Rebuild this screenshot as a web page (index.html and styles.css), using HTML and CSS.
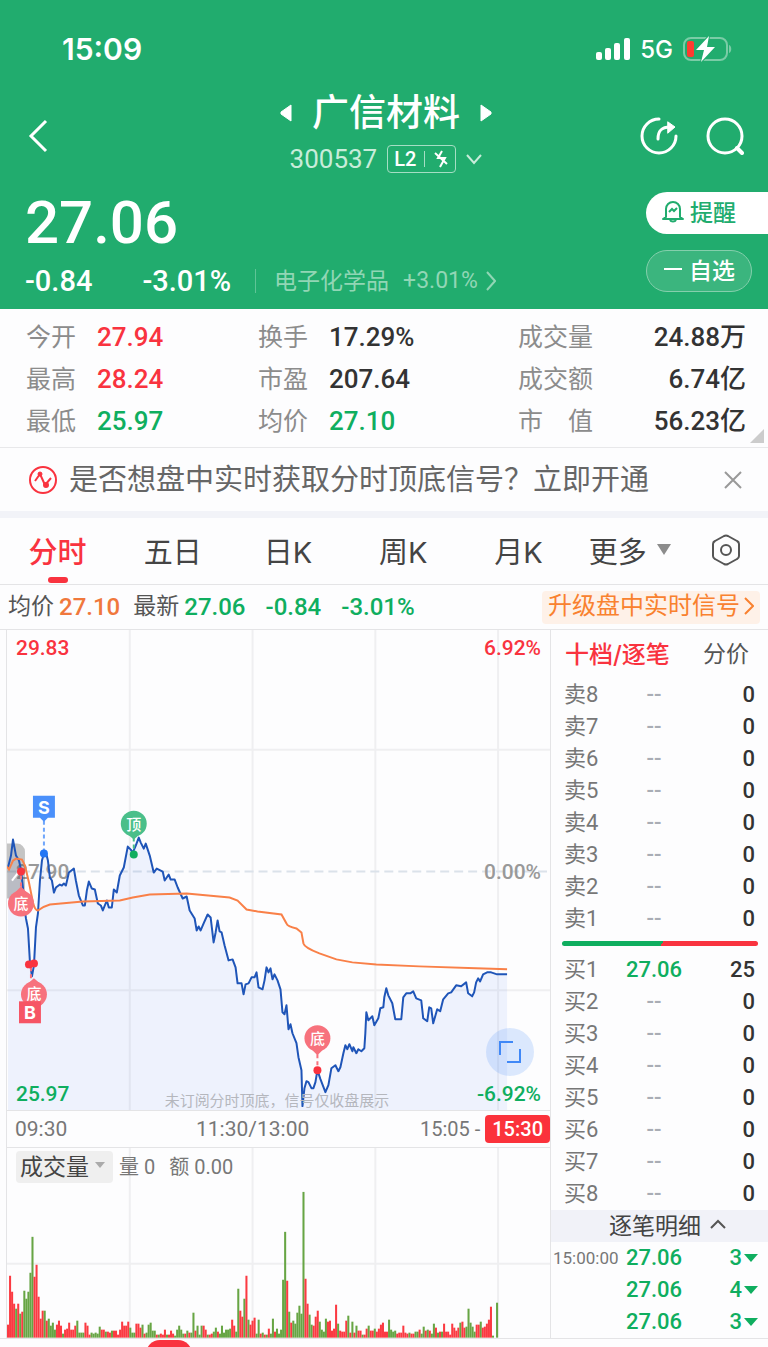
FILE: index.html
```html
<!DOCTYPE html>
<html lang="zh-CN">
<head>
    <meta charset="UTF-8">
    <meta name="viewport" content="width=device-width, initial-scale=1.0">
    <title>广信材料 300537</title>
    <link rel="stylesheet" href="styles.css">
</head>
<body>
    <header class="header">
        <div class="status-bar">
            <span class="clock">15:09</span>
            <div class="status-icons">
                <svg width="34" height="24" viewBox="0 0 34 24" fill="#fff">
                    <rect x="0" y="15" width="6" height="8" rx="2"/>
                    <rect x="9" y="11" width="6" height="12" rx="2"/>
                    <rect x="18" y="6" width="6" height="17" rx="2"/>
                    <rect x="28" y="1" width="6" height="22" rx="2"/>
                </svg>
                <span>5G</span>
                <svg width="50" height="26" viewBox="0 0 50 26">
                    <rect x="1" y="2" width="43" height="22" rx="7" fill="none" stroke="#7acca6" stroke-width="2"/>
                    <path d="M46 9c3 1 3 7 0 8z" fill="#7acca6"/>
                    <rect x="4" y="5" width="7" height="16" rx="2" fill="#ff3b30"/>
                    <path d="M26 0L13 14h8l-3 12 14-15h-8z" fill="#fff" stroke="#21ac6e" stroke-width="2" paint-order="stroke"/>
                </svg>
            </div>
        </div>

        <div class="nav">
            <button class="icon-btn back" aria-label="返回">
                <svg width="20" height="34" viewBox="0 0 20 34" fill="none" stroke="#fff" stroke-width="3"><path d="M18 2L3 17l15 15"/></svg>
            </button>
            <div class="nav-title">
                <div class="stock-name">
                    <svg width="12" height="18" viewBox="0 0 12 18" fill="#fff" stroke="#fff" stroke-linejoin="round"><path d="M11 1v16L1 10V8z"/></svg>
                    <h1>广信材料</h1>
                    <svg width="12" height="18" viewBox="0 0 12 18" fill="#fff" stroke="#fff" stroke-linejoin="round"><path d="M1 1v16l10-7V8z"/></svg>
                </div>
                <div class="stock-code">
                    <span>300537</span>
                    <span class="level">L2
                        <i></i>
                        <svg width="16" height="18" viewBox="0 0 16 18" fill="none" stroke="#fff" stroke-width="2"><path d="M9 1L5 8h7l-5 9M2 3l12 11"/></svg>
                    </span>
                    <svg width="16" height="12" viewBox="0 0 16 12" fill="none" stroke="#c8ecda" stroke-width="2"><path d="M1 2l7 8 7-8"/></svg>
                </div>
            </div>
            <div class="nav-actions">
                <button class="icon-btn" aria-label="分享">
                    <svg width="38" height="38" viewBox="0 0 38 38" fill="none" stroke="#fff" stroke-width="3" stroke-linecap="round">
                        <path d="M19 2A17 17 0 1 0 36 19"/>
                        <path d="M18 22c0-8 3-12 12-12" />
                        <path d="M28 5l7 5-7 6z" fill="#fff" stroke-width="1"/>
                    </svg>
                </button>
                <button class="icon-btn" aria-label="搜索">
                    <svg width="38" height="38" viewBox="0 0 38 38" fill="none" stroke="#fff" stroke-width="3" stroke-linecap="round">
                        <circle cx="19" cy="19" r="17"/>
                        <path d="M31 31l5 5" stroke-width="4"/>
                    </svg>
                </button>
            </div>
        </div>

        <div class="quote">
            <div class="quote-main">
                <div class="price">27.06</div>
                <div class="changes">
                    <span class="diff">-0.84</span>
                    <span class="diff percent">-3.01%</span>
                    <a class="sector" href="#">电子化学品 <span>+3.01%</span>
                        <svg width="10" height="20" viewBox="0 0 10 20" fill="none" stroke="currentColor" stroke-width="2"><path d="M1 1l8 9-8 9"/></svg>
                    </a>
                </div>
            </div>
            <div class="quote-actions">
                <button class="alert-btn">
                    <svg width="22" height="24" viewBox="0 0 22 24" fill="none" stroke="currentColor" stroke-width="2">
                        <path d="M4 18V10a7 7 0 0 1 14 0v8l3 2H1z" stroke-linejoin="round"/>
                        <path d="M8 21c1 2 5 2 6 0M7 13l3-3 2 2 3-3"/>
                    </svg>
                    提醒
                </button>
                <button class="watch-btn">
                    <svg width="20" height="4" viewBox="0 0 20 4"><path d="M1 2h18" stroke="#fff" stroke-width="2"/></svg>
                    自选
                </button>
            </div>
        </div>
    </header>

    <section class="stats">
        <dl>
            <div><dt>今开</dt><dd class="up">27.94</dd></div>
            <div><dt>最高</dt><dd class="up">28.24</dd></div>
            <div><dt>最低</dt><dd class="down">25.97</dd></div>
        </dl>
        <dl>
            <div><dt>换手</dt><dd>17.29%</dd></div>
            <div><dt>市盈</dt><dd>207.64</dd></div>
            <div><dt>均价</dt><dd class="down">27.10</dd></div>
        </dl>
        <dl class="wide">
            <div><dt>成交量</dt><dd>24.88万</dd></div>
            <div><dt>成交额</dt><dd>6.74亿</dd></div>
            <div><dt>市　值</dt><dd>56.23亿</dd></div>
        </dl>
    </section>

    <div class="notice">
        <svg width="28" height="28" viewBox="0 0 28 28" fill="none" stroke="#f9333f" stroke-width="2">
            <circle cx="14" cy="14" r="13"/>
            <path d="M6 15l5-7 5 11 6-7" stroke-linejoin="round"/>
            <circle cx="11" cy="8" r="2" fill="#f9333f" stroke-width="1"/>
            <circle cx="17" cy="19" r="2" fill="#f9333f"/>
        </svg>
        <p>是否想盘中实时获取分时顶底信号？立即开通</p>
        <button class="icon-btn" aria-label="关闭">
            <svg width="18" height="18" viewBox="0 0 18 18" stroke="#999" stroke-width="2"><path d="M1 1l16 16M17 1L1 17"/></svg>
        </button>
    </div>

    <nav class="tabs">
        <button class="tab active">分时</button>
        <button class="tab">五日</button>
        <button class="tab">日K</button>
        <button class="tab">周K</button>
        <button class="tab">月K</button>
        <button class="tab">更多 <svg width="14" height="11" viewBox="0 0 14 11" fill="#8c8c8c"><path d="M0 0h14L7 11z"/></svg></button>
        <button class="tab" aria-label="设置">
            <svg width="30" height="32" viewBox="0 0 30 32" fill="none" stroke="#555" stroke-width="2" stroke-linejoin="round">
                <path d="M13 2q2-1 4 0l9 5q2 1 2 3v12q0 2-2 3l-9 5q-2 1-4 0l-9-5q-2-1-2-3V10q0-2 2-3z"/>
                <circle cx="15" cy="16" r="5"/>
            </svg>
        </button>
    </nav>

    <div class="summary">
        <span>均价</span><b class="avg">27.10</b>
        <span class="latest">最新</span><b class="down">27.06</b>
        <b class="down gap">-0.84</b>
        <b class="down gap">-3.01%</b>
        <a class="upgrade" href="#">升级盘中实时信号<svg width="10" height="18" viewBox="0 0 10 18" fill="none" stroke="currentColor" stroke-width="2"><path d="M1 1l8 8-8 8"/></svg></a>
    </div>

    <main class="main">
        <div class="charts">
            <div class="price-chart">
                <svg viewBox="0 0 544 481">
                    <path class="grid" d="M0 120H544M0 361H544M123 0V481M246 0V481M369 0V481M492 0V481"/>
                    <path class="mid" d="M0 242H544"/>
                    <text class="label muted" x="9" y="249">27.90</text>
                    <path id="priceArea" class="area"/>
                    <path class="handle" d="M0 214H10a8 8 0 0 1 8 8v39a8 8 0 0 1-8 8H0z"/>
                    <path d="M5 251l7-9" stroke="#fff" stroke-width="2"/>
                    <path id="priceLine" class="line"/>
                    <path class="avg-line" d="M0 237L2 240L6 231L9 229L15 230L18 236L22 253L26 273Q28 281 31 281Q36 277 43 275L76 272L113 271L126 268L143 265L180 264L223 268L231 271L240 280L251 282L275 285L280 294Q281 297 290 299L295 303L297 314Q298 318 313 324L330 330L346 333L370 335L413 337L470 339L501 340"/>

                    <g class="mark blue">
                        <path d="M37 191V224" class="dash"/>
                        <path d="M26 166h22v22h-7l-4 4-4-4h-7z"/>
                        <circle class="dot" cx="37" cy="224" r="4"/>
                        <text x="37" y="184">S</text>
                    </g>
                    <g class="mark green">
                        <path d="M127 208V225" class="dash"/>
                        <path d="M120 204h14l-7 6z"/>
                        <circle cx="127" cy="194" r="13"/>
                        <circle class="dot" cx="127" cy="225" r="4"/>
                        <text class="cn" x="127" y="200">顶</text>
                    </g>
                    <g class="mark red">
                        <path d="M14 246V258" class="dash"/>
                        <path d="M7 264h14l-7-7z"/>
                        <circle cx="14" cy="274" r="13"/>
                        <circle class="dot" cx="14" cy="242" r="4"/>
                        <text class="cn" x="14" y="280">底</text>
                    </g>
                    <g class="mark red">
                        <path d="M24 338V352" class="dash"/>
                        <path d="M20 355h14l-7-6z"/>
                        <circle cx="27" cy="365" r="13"/>
                        <circle class="dot" cx="27" cy="334" r="4"/>
                        <circle class="dot" cx="22" cy="335" r="4"/>
                        <text class="cn" x="27" y="370">底</text>
                        <path class="solid" d="M12 372h22v22h-22z"/>
                        <text x="23" y="390">B</text>
                    </g>
                    <g class="mark red">
                        <path d="M311 425V441" class="dash"/>
                        <path d="M304 419h14l-7 7z"/>
                        <circle cx="311" cy="409" r="13"/>
                        <circle class="dot" cx="311" cy="441" r="4"/>
                        <text class="cn" x="311" y="415">底</text>
                    </g>

                    <text class="label up" x="9" y="25">29.83</text>
                    <text class="label up" x="535" y="25" text-anchor="end">6.92%</text>
                    <text class="label muted" x="535" y="249" text-anchor="end">0.00%</text>
                    <text class="label down" x="9" y="472">25.97</text>
                    <text class="label down" x="535" y="472" text-anchor="end">-6.92%</text>
                    <text class="hint" x="158" y="477">未订阅分时顶底，信号仅收盘展示</text>
                </svg>
                <button class="expand" aria-label="全屏">
                    <svg width="22" height="22" viewBox="0 0 22 22" fill="none" stroke="#4088f7" stroke-width="2"><path d="M1 14V1h13M21 8v13H8"/></svg>
                </button>
            </div>
            <div class="axis">
                <span>09:30</span>
                <span>11:30/13:00</span>
                <span class="close">15:05 - <b>15:30</b></span>
            </div>
            <div class="volume-chart">
                <div class="volume-head">
                    <button>成交量<svg width="10" height="6" viewBox="0 0 10 6" fill="#aaa"><path d="M0 0h10L5 6z"/></svg></button>
                    <span>量 0</span>
                    <span>额 0.00</span>
                </div>
                <svg viewBox="0 0 544 190">
                    <path class="grid" d="M0 116H544M123 0V190M246 0V190M369 0V190M492 0V190"/>
                    <g id="volumeBars"></g>
                </svg>
            </div>
        </div>

        <aside class="book">
            <div class="book-tabs">
                <button class="active">十档/逐笔</button>
                <button>分价</button>
            </div>
            <table>
                <tr><th>卖8</th><td>--</td><td>0</td></tr>
                <tr><th>卖7</th><td>--</td><td>0</td></tr>
                <tr><th>卖6</th><td>--</td><td>0</td></tr>
                <tr><th>卖5</th><td>--</td><td>0</td></tr>
                <tr><th>卖4</th><td>--</td><td>0</td></tr>
                <tr><th>卖3</th><td>--</td><td>0</td></tr>
                <tr><th>卖2</th><td>--</td><td>0</td></tr>
                <tr><th>卖1</th><td>--</td><td>0</td></tr>
            </table>
            <div class="ratio"></div>
            <table>
                <tr><th>买1</th><td class="down">27.06</td><td>25</td></tr>
                <tr><th>买2</th><td>--</td><td>0</td></tr>
                <tr><th>买3</th><td>--</td><td>0</td></tr>
                <tr><th>买4</th><td>--</td><td>0</td></tr>
                <tr><th>买5</th><td>--</td><td>0</td></tr>
                <tr><th>买6</th><td>--</td><td>0</td></tr>
                <tr><th>买7</th><td>--</td><td>0</td></tr>
                <tr><th>买8</th><td>--</td><td>0</td></tr>
            </table>
            <button class="detail-head">逐笔明细
                <svg width="16" height="10" viewBox="0 0 16 10" fill="none" stroke="#555" stroke-width="2"><path d="M1 9l7-7 7 7"/></svg>
            </button>
            <table class="trades">
                <tr><th>15:00:00</th><td>27.06</td><td>3<svg width="14" height="8" viewBox="0 0 14 8"><path d="M0 0h14L7 8z"/></svg></td></tr>
                <tr><th></th><td>27.06</td><td>4<svg width="14" height="8" viewBox="0 0 14 8"><path d="M0 0h14L7 8z"/></svg></td></tr>
                <tr><th></th><td>27.06</td><td>3<svg width="14" height="8" viewBox="0 0 14 8"><path d="M0 0h14L7 8z"/></svg></td></tr>
            </table>
        </aside>
    </main>

    <footer class="footer"><div class="pill"></div></footer>

    <script src="chart.js"></script>
</body>
</html>
```

FILE: styles.css
```css
* {
    margin: 0;
    padding: 0;
    box-sizing: border-box;
}

body {
    font-family: Inter, "Noto Sans CJK SC", sans-serif;
    background: #fdfdfe;
    color: #333;
    overflow-x: hidden;
}

button {
    font: inherit;
    color: inherit;
    background: none;
    border: 0;
    cursor: pointer;
}

a {
    color: inherit;
    text-decoration: none;
}

svg {
    display: block;
    flex: none;
}

.up {
    color: #f9333f;
    fill: #f9333f;
}

.down {
    color: #0fae5f;
    fill: #0fae5f;
}

/* Header */
.header {
    background: #21ac6e;
    color: #fff;
}

.status-bar {
    height: 90px;
    padding: 8px 35px 0 62px;
    display: flex;
    align-items: center;
    justify-content: space-between;
}

.clock {
    font-size: 30px;
    font-weight: 600;
}

.status-icons {
    display: flex;
    align-items: center;
    gap: 10px;
    font-size: 24px;
    font-weight: 500;
}

.nav {
    display: grid;
    grid-template-columns: 1fr auto 1fr;
    align-items: center;
    height: 92px;
    padding: 0 24px 0 28px;
}

.back {
    justify-self: start;
}

.stock-name {
    display: flex;
    align-items: center;
    justify-content: center;
    gap: 20px;
    height: 46px;
}

.stock-name h1 {
    font-size: 37px;
    font-weight: 500;
    line-height: 46px;
}

.stock-code {
    display: flex;
    align-items: center;
    justify-content: center;
    gap: 10px;
    height: 46px;
    font-family: Roboto, sans-serif;
    font-size: 26px;
    color: #c8ecda;
}

.level {
    display: flex;
    align-items: center;
    gap: 6px;
    height: 28px;
    padding: 0 6px;
    border: 1px solid #a5dec4;
    border-radius: 4px;
    font-size: 20px;
    font-weight: 500;
    color: #fff;
}

.level i {
    width: 1px;
    height: 16px;
    margin: 0 2px;
    background: #a5dec4;
}

.nav-actions {
    justify-self: end;
    display: flex;
    gap: 28px;
}

.quote {
    display: flex;
    justify-content: space-between;
    padding: 6px 0 5px 25px;
}

.price {
    font: 500 60px/70px Roboto, sans-serif;
}

.changes {
    display: flex;
    align-items: center;
    height: 46px;
}

.diff {
    font: 500 29px/46px Roboto, sans-serif;
}

.percent {
    margin-left: 50px;
}

.sector {
    display: flex;
    align-items: center;
    gap: 14px;
    margin-left: 24px;
    padding-left: 18px;
    font-size: 23px;
    line-height: 24px;
    color: #91d6b5;
    border-left: 1px solid #5fc496;
}

.sector span {
    font-family: Roboto, sans-serif;
}

.sector svg {
    margin-left: -6px;
}

.quote-actions {
    display: flex;
    flex-direction: column;
    align-items: flex-end;
    gap: 16px;
    padding-top: 4px;
}

.alert-btn,
.watch-btn {
    display: flex;
    align-items: center;
    gap: 6px;
    height: 42px;
    padding: 0 16px 4px;
    font-size: 23px;
    font-weight: 500;
    border-radius: 21px;
}

.alert-btn {
    padding-right: 32px;
    color: #21ac6e;
    background: #fff;
    border-radius: 21px 0 0 21px;
}

.watch-btn {
    margin-right: 16px;
    background: #3bb57e;
    border: 1px solid #84cfac;
}

/* Stats */
.stats {
    display: grid;
    grid-template-columns: 232fr 260fr 228fr;
    padding: 7px 22px 5px 26px;
    border-bottom: 1px solid #e8e8ea;
    position: relative;
}

.stats::after {
    content: "";
    position: absolute;
    right: 4px;
    bottom: 4px;
    border: solid transparent;
    border-width: 14px 0 0 14px;
    border-bottom: 14px solid #ccc;
    border-top: 0;
}

.stats dl > div {
    display: flex;
    height: 42px;
    line-height: 42px;
}

.stats dt {
    width: 71px;
    font-size: 25px;
    color: #8c8c8c;
}

.stats dd {
    font-family: Roboto, "Noto Sans CJK SC", sans-serif;
    font-size: 26px;
    font-weight: 500;
}

.stats .wide > div {
    justify-content: space-between;
}

.stats .wide dt {
    width: auto;
}

/* Notice */
.notice {
    display: flex;
    align-items: center;
    gap: 12px;
    height: 70px;
    padding: 0 26px 0 29px;
    border-bottom: 7px solid #f2f3f8;
}

.notice p {
    flex: 1;
    font-size: 29px;
    line-height: 40px;
    white-space: nowrap;
    color: #666;
}

/* Tabs */
.tabs {
    display: grid;
    grid-template-columns: repeat(5, 15fr) 14fr 11fr;
    height: 67px;
    border-bottom: 1px solid #e4e4e6;
}

.tab {
    position: relative;
    display: flex;
    align-items: center;
    justify-content: center;
    gap: 10px;
    padding-bottom: 3px;
    font-size: 29px;
    color: #444;
}

.tab.active {
    color: #f9333f;
    font-weight: 500;
}

.tab.active::after {
    content: "";
    position: absolute;
    bottom: 1px;
    width: 20px;
    height: 6px;
    border-radius: 3px;
    background: #f9333f;
}

.summary {
    display: flex;
    align-items: center;
    height: 44px;
    padding: 0 8px;
    font-size: 23px;
    line-height: 32px;
    color: #555;
}

.summary span {
    padding-bottom: 2px;
}

.summary b {
    margin-left: 5px;
    font: 500 24px/32px Roboto, sans-serif;
}

.summary .avg {
    color: #f0783c;
}

.summary .latest {
    margin-left: 13px;
}

.summary .gap {
    margin-left: 20px;
}

.upgrade {
    display: flex;
    align-items: center;
    gap: 4px;
    height: 33px;
    margin-left: auto;
    padding: 0 6px 2px;
    font-size: 24px;
    color: #f9812f;
    background: #fef1e8;
    border-radius: 4px;
}

/* Charts */
.main {
    display: grid;
    grid-template-columns: 1fr 217px;
    border-top: 1px solid #e4e4e6;
    border-bottom: 1px solid #e4e4e6;
}

.charts {
    margin-left: 6px;
    border: solid #e4e4e6;
    border-width: 0 1px;
}

.charts svg {
    width: 100%;
}

.price-chart {
    position: relative;
}

.grid {
    fill: none;
    stroke: #efeff1;
    stroke-width: 2;
}

.mid {
    stroke: #dbe2ea;
    stroke-width: 2;
    stroke-dasharray: 9 5;
}

.area {
    fill: rgba(64, 120, 240, 0.08);
}

.line {
    fill: none;
    stroke: #1f55b8;
    stroke-width: 2;
    stroke-linejoin: round;
}

.avg-line {
    fill: none;
    stroke: #f98048;
    stroke-width: 2;
}

.handle {
    fill: rgba(90, 90, 90, 0.35);
}

.label {
    font: 500 21px Roboto, sans-serif;
}

.muted {
    fill: #999;
}

.hint {
    font-size: 15px;
    fill: #b5b7bd;
}

.mark text {
    font: 700 18px Inter, sans-serif;
    text-anchor: middle;
    fill: #fff;
}

.mark .cn {
    font: 500 15px "Noto Sans CJK SC", sans-serif;
}

.mark .dash {
    fill: none;
    stroke-width: 2;
    stroke-dasharray: 4 3;
}

.blue {
    fill: #4a90fb;
    stroke: none;
}

.blue .dash {
    stroke: #6fa6fb;
}

.blue .dot {
    fill: #2276f5;
}

.green {
    fill: #4abf8a;
}

.green .dash {
    stroke: #4abf8a;
}

.green .dot {
    fill: #0fae5f;
}

.red {
    fill: #f7727d;
}

.red .dash {
    stroke: #f7727d;
}

.red .dot {
    fill: #f9333f;
}

.red .solid {
    fill: #f65565;
}

.expand {
    position: absolute;
    right: 16px;
    bottom: 34px;
    width: 48px;
    height: 48px;
    border-radius: 50%;
    background: rgba(64, 136, 247, 0.18);
}

.expand svg {
    width: 22px;
    margin: auto;
}

.axis {
    display: grid;
    grid-template-columns: 182fr 112fr 242fr;
    align-items: center;
    height: 38px;
    padding-left: 8px;
    border: solid #e4e4e6;
    border-width: 1px 0;
    font: 400 21px Roboto, sans-serif;
    white-space: nowrap;
    color: #777;
}

.axis .close {
    justify-self: end;
    font-size: 20px;
}

.axis b {
    display: inline-block;
    padding: 0 7px;
    font-weight: 500;
    line-height: 28px;
    color: #fff;
    background: #fb323b;
    border-radius: 4px;
}

.volume-chart {
    position: relative;
}

.volume-head {
    position: absolute;
    top: 3px;
    left: 9px;
    display: flex;
    align-items: center;
    gap: 14px;
    font-family: Roboto, "Noto Sans CJK SC", sans-serif;
    font-size: 20px;
    color: #777;
}

.volume-head button {
    display: flex;
    align-items: center;
    gap: 6px;
    height: 32px;
    padding: 0 8px 4px 4px;
    margin-right: -8px;
    font-size: 23px;
    color: #444;
    background: #efefef;
    border-radius: 4px;
}

.volume-head span {
    padding-bottom: 3px;
}

.volume-head svg {
    width: 10px;
}

.bar-up {
    fill: #fb3a42;
}

.bar-down {
    fill: #67a544;
}

/* Order book */
.book-tabs {
    display: flex;
    justify-content: space-between;
    height: 49px;
    padding: 0 19px 5px 14px;
    font-size: 23px;
    color: #555;
}

.book-tabs .active {
    font-weight: 500;
    font-size: 24px;
    color: #f9333f;
}

.book table {
    width: 100%;
    border-collapse: collapse;
    table-layout: fixed;
}

.book tr {
    height: 32px;
}

.book th,
.book td {
    font: 500 22px/32px Roboto, "Noto Sans CJK SC", sans-serif;
}

.book th {
    width: 64px;
    padding-left: 13px;
    text-align: left;
    font-weight: 400;
    color: #777;
}

.book td:nth-child(2) {
    width: 78px;
    text-align: center;
    color: #a9adb5;
}

.book td:last-child {
    padding-right: 13px;
    text-align: right;
}

.book td.down:nth-child(2) {
    color: #0fae5f;
}

.ratio {
    height: 5px;
    margin: 6px 10px 8px 11px;
    border-radius: 3px;
    background: linear-gradient(120deg, #0fae5f 51%, #f9333f 51%);
}

.detail-head {
    display: flex;
    align-items: center;
    justify-content: center;
    gap: 9px;
    width: 100%;
    height: 32px;
    padding: 0 0 4px 16px;
    font-size: 23px;
    color: #444;
    background: #f1f2f8;
}

.book .trades th {
    padding-left: 2px;
    font-size: 17px;
    white-space: nowrap;
}

.book .trades td:nth-child(n) {
    color: #0fae5f;
}

.book .trades td:last-child {
    padding-right: 10px;
}

.trades svg {
    display: inline-block;
    margin: 0 0 3px 2px;
    fill: #0fae5f;
}

.footer {
    height: 8px;
    padding: 1px 0 0 146px;
    overflow: hidden;
}

.pill {
    width: 46px;
    height: 30px;
    border-radius: 14px;
    background: #f9333f;
}
```

FILE: chart.js
```javascript
const SVG_NS = 'http://www.w3.org/2000/svg';

// minute prices as x,y pairs
const price = `1,238 4,226 6,210 9,226 12,231 14,240 16,258 17,276 19,289 21,299 23,333 25,347 27,336 29,298
31,284 33,251 35,231 37,224 39,223 41,231 43,248 45,251 47,263 49,258 53,255 55,256 57,254 59,256 62,243 67,239
69,251 72,266 76,276 78,276 80,261 82,252 85,259 88,260 91,274 94,276 96,281 100,271 102,278 105,278 107,260
110,263 113,246 117,238 121,217 124,220 126,223 129,216 132,208 134,213 137,219 139,214 143,226 147,243 150,239
156,242 158,251 162,245 164,250 168,250 171,258 176,269 180,267 183,281 188,289 190,301 192,297 194,301 197,294
201,285 204,288 207,313 209,303 211,291 213,302 215,303 218,316 222,331 226,330 229,338 231,354 235,354 237,365
239,355 242,354 245,348 248,348 250,343 252,358 256,360 258,351 260,338 262,343 264,339 266,350 268,345 271,351
274,360 276,383 278,385 280,376 282,400 284,395 286,404 290,414 292,428 295,441 296,477 298,459 300,452 302,453
305,459 307,459 309,453 311,441 314,450 319,463 322,456 325,439 329,436 332,442 334,438 337,424 339,416 341,420
343,415 346,422 347,418 350,424 352,420 355,422 358,419 359,404 360,383 362,391 366,387 368,396 372,389 374,379
377,378 378,368 380,359 382,366 386,374 389,390 395,390 397,368 400,364 404,364 407,362 410,369 415,371 417,389
421,392 423,378 425,379 427,394 431,380 434,382 437,370 442,364 445,363 450,356 455,357 460,353 462,364 466,367
468,363 470,353 472,349 474,352 477,345 481,343 485,343 491,345 501,345`.split(/\s+/);

document.getElementById('priceLine').setAttribute('d', 'M' + price.join('L'));
document.getElementById('priceArea').setAttribute('d', 'M1,481L' + price.join('L') + 'L501,481Z');

// one bar per minute, r = up, g = down
const volume = `r13 r62 r46 r34 g29 r34 g24 r26 g47 g39 g46 g65 g101 r61 r73 r41 r19 r27 g27 r17 g19 g12 g15 g8
r13 r17 r12 g4 r8 r9 r15 r8 r8 r12 g17 g5 g5 g5 r15 r12 r3 g5 g4 g5 g4 g11 r8 r8 g6 r6 r5 g7 r7 r7 r3 r8 r16 r12
r12 r16 g10 g5 g5 r14 r14 r10 g13 r4 g5 g13 g15 g7 g7 r3 g3 r4 r3 r8 g3 r3 r7 r4 g2 g8 g12 g8 g4 r4 g7 r5 g5 g25
r7 g12 g3 g12 r12 r8 g3 r3 r4 g6 g10 r6 g4 g12 g5 g8 g8 g9 r18 r12 g6 g49 r27 r21 g39 r62 g18 r13 r17 r20 g4 g18
r4 g5 r3 g3 r9 g4 g19 r6 g9 g4 g8 g58 g106 r57 g26 r15 g17 g14 g25 g32 g24 g146 r59 r34 g23 g13 r12 r21 r27 g16
g8 g6 g19 r16 r17 r7 r9 r33 g14 r7 r6 r6 r17 g22 r5 g16 r5 g12 r7 r7 g3 r3 r9 g12 r7 r7 g9 r6 r9 r13 r15 r6 r6
g18 g8 g6 g7 r4 r5 r5 r12 r5 r4 g5 r4 r4 g6 g6 r8 g4 g11 r7 g8 r7 g4 g14 r10 g5 r6 g6 r14 r6 r6 r3 r14 r10 r7
r10 g15 r16 r10 g11 g29 g15 g11 g6 r13 r13 g16 r10 r11 r14 r18 r31 g2 g0 g35`.split(/\s+/);

const bars = document.getElementById('volumeBars');
const step = 492 / volume.length;

volume.forEach((item, i) => {
    const height = Number(item.slice(1));
    const rect = document.createElementNS(SVG_NS, 'rect');
    rect.setAttribute('x', i * step);
    rect.setAttribute('y', 190 - height);
    rect.setAttribute('width', step);
    rect.setAttribute('height', height);
    rect.setAttribute('class', item[0] === 'r' ? 'bar-up' : 'bar-down');
    bars.appendChild(rect);
});
```
